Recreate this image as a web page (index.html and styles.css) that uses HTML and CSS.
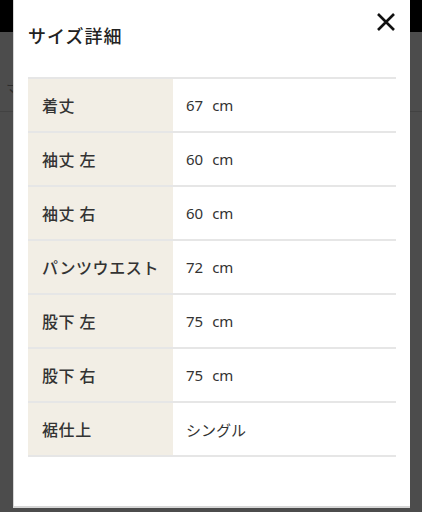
FILE: index.html
```html
<!DOCTYPE html>
<html lang="ja">
<head>
    <meta charset="UTF-8">
    <meta name="viewport" content="width=device-width, initial-scale=1.0">
    <title>サイズ詳細</title>
    <link rel="stylesheet" href="styles.css">
</head>
<body>
    <div class="page">
        <header class="header"></header>
        <div class="search">
            <span class="search-text">マ</span>
        </div>
    </div>

    <div class="overlay">
        <div class="modal">
            <div class="modal-head">
                <h2 class="modal-title">サイズ詳細</h2>
                <button class="close" aria-label="閉じる">
                    <svg width="20" height="20" viewBox="0 0 20 20">
                        <path d="M2 2 L18 18 M18 2 L2 18" stroke="#111" stroke-width="2.6" fill="none"/>
                    </svg>
                </button>
            </div>
            <table class="size-table">
                <tr><th>着丈</th><td>67<span class="unit">cm</span></td></tr>
                <tr><th>袖丈 左</th><td>60<span class="unit">cm</span></td></tr>
                <tr><th>袖丈 右</th><td>60<span class="unit">cm</span></td></tr>
                <tr><th>パンツウエスト</th><td>72<span class="unit">cm</span></td></tr>
                <tr><th>股下 左</th><td>75<span class="unit">cm</span></td></tr>
                <tr><th>股下 右</th><td>75<span class="unit">cm</span></td></tr>
                <tr><th>裾仕上</th><td>シングル</td></tr>
            </table>
        </div>
    </div>
</body>
</html>
```

FILE: styles.css
```css
body {
    margin: 0;
    font-family: "Noto Sans", "Noto Sans CJK JP", sans-serif;
    color: #333;
    background: #fff;
    overflow: hidden;
}
.page {
    height: 512px;
}
.header {
    height: 32px;
    background: #000;
}
.search {
    height: 80px;
    border-bottom: 1px solid #ddd;
    display: flex;
    align-items: flex-end;
    padding: 0 0 12px 6px;
    box-sizing: border-box;
}
.search-text {
    font-size: 15px;
    color: #999;
}
.overlay {
    position: fixed;
    inset: 0;
    background: rgba(0, 0, 0, 0.7);
    display: flex;
    align-items: flex-start;
    padding-left: 13px;
}
.modal {
    width: 397px;
    height: 508px;
    background: #fff;
    border-bottom: 2px solid #d6d6d6;
    border-left: 1px solid #d6d6d6;
    box-sizing: border-box;
    padding: 0 14px 0 14px;
}
.modal-head {
    position: relative;
    height: 77px;
}
.modal-title {
    margin: 0;
    padding-top: 22px;
    font-family: "Noto Sans CJK JP", sans-serif;
    font-size: 18px;
    font-weight: 500;
    letter-spacing: 1px;
    color: #222;
    line-height: 26px;
}
.close {
    position: absolute;
    top: 12px;
    right: 0;
    border: none;
    background: none;
    padding: 0;
    width: 20px;
    height: 20px;
    cursor: pointer;
}
.size-table {
    width: 100%;
    border-collapse: collapse;
    border-top: 2px solid #e6e6e6;
}
.size-table tr {
    height: 54px;
    border-bottom: 2px solid #e6e6e6;
}
.size-table th {
    width: 145px;
    box-sizing: border-box;
    background: #f2eee5;
    text-align: left;
    font-family: "Noto Sans CJK JP", sans-serif;
    font-weight: 500;
    font-size: 16px;
    letter-spacing: 0.6px;
    color: #333;
    padding: 0 0 0 14px;
    white-space: nowrap;
}
.size-table td {
    font-size: 15px;
    color: #333;
    padding: 0 0 0 13px;
}
.unit {
    margin-left: 9px;
}
```
